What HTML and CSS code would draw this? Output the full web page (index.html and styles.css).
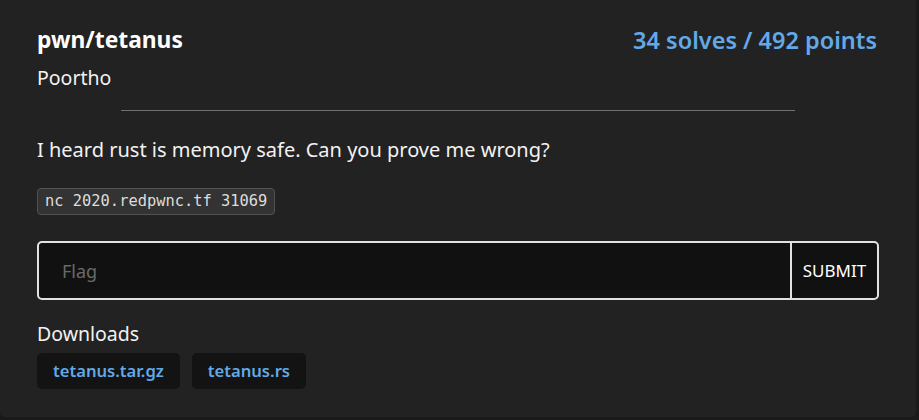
FILE: index.html
```html
<!DOCTYPE html>
<html>
<head>
<meta charset="utf-8">
<link rel="stylesheet" href="styles.css">
</head>
<body>
<div class="card">
  <div class="head">
    <div class="title">pwn/tetanus</div>
    <div class="score">34 solves / 492 points</div>
  </div>
  <div class="author">Poortho</div>
  <hr class="rule">
  <p class="desc">I heard rust is memory safe. Can you prove me wrong?</p>
  <code class="cmd">nc 2020.redpwnc.tf 31069</code>
  <form class="flagform">
    <input class="flag" type="text" placeholder="Flag">
    <button class="submit" type="button">SUBMIT</button>
  </form>
  <div class="dl-label">Downloads</div>
  <div class="dls">
    <a class="dl">tetanus.tar.gz</a>
    <a class="dl">tetanus.rs</a>
  </div>
</div>
</body>
</html>
```
FILE: styles.css
```css
html, body {
  margin: 0;
  padding: 0;
  background: #1a1a1a;
}
body {
  font-family: "Noto Sans", "Open Sans", sans-serif;
  color: #f2f2f2;
}
.card {
  box-sizing: border-box;
  width: 916px;
  height: 417px;
  background: #222222;
  border-radius: 0 0 5px 5px;
  padding: 25px 37px 0 37px;
}
.head {
  display: flex;
  justify-content: space-between;
  align-items: center;
  padding-right: 2px;
  line-height: 30px;
}
.title {
  font-size: 22.8px;
  font-weight: 700;
  color: #ffffff;
}
.score {
  font-size: 23.5px;
  font-weight: 600;
  color: #62a9e6;
}
.author {
  font-size: 19.5px;
  line-height: 26px;
  margin-top: 10px;
}
.rule {
  width: 80%;
  margin: 19px auto 0 auto;
  border: 0;
  border-top: 1px solid #707070;
}
.desc {
  font-size: 20px;
  line-height: 28px;
  margin: 25px 0 0 0;
}
.cmd {
  display: inline-block;
  margin-top: 24px;
  font-family: "DejaVu Sans Mono", monospace;
  font-size: 15.4px;
  line-height: 19px;
  color: #dddddd;
  background: #333333;
  border: 1px solid #525252;
  border-radius: 4px;
  padding: 3px 7px;
}
.flagform {
  display: flex;
  margin-top: 26px;
  height: 59px;
  box-sizing: border-box;
  border: 2px solid #e2e2e2;
  border-radius: 5px;
  background: #111111;
  overflow: hidden;
}
.flag {
  flex: 1;
  min-width: 0;
  background: transparent;
  border: 0;
  outline: none;
  padding: 0 0 0 23px;
  font-family: "Noto Sans", sans-serif;
  font-size: 18px;
  color: #eee;
}
.flag::placeholder {
  color: #6a6a6a;
}
.submit {
  width: 87px;
  background: transparent;
  border: 0;
  border-left: 2px solid #e2e2e2;
  color: #ffffff;
  font-family: "Noto Sans", sans-serif;
  font-size: 17px;
  padding: 0;
}
.dl-label {
  font-size: 19.5px;
  line-height: 26px;
  margin-top: 21px;
}
.dls {
  display: flex;
  gap: 12px;
  margin-top: 6px;
}
.dl {
  background: #131313;
  color: #62a9e6;
  font-weight: 600;
  font-size: 16.6px;
  line-height: 24px;
  border-radius: 5px;
  padding: 6px 16px;
}
```
